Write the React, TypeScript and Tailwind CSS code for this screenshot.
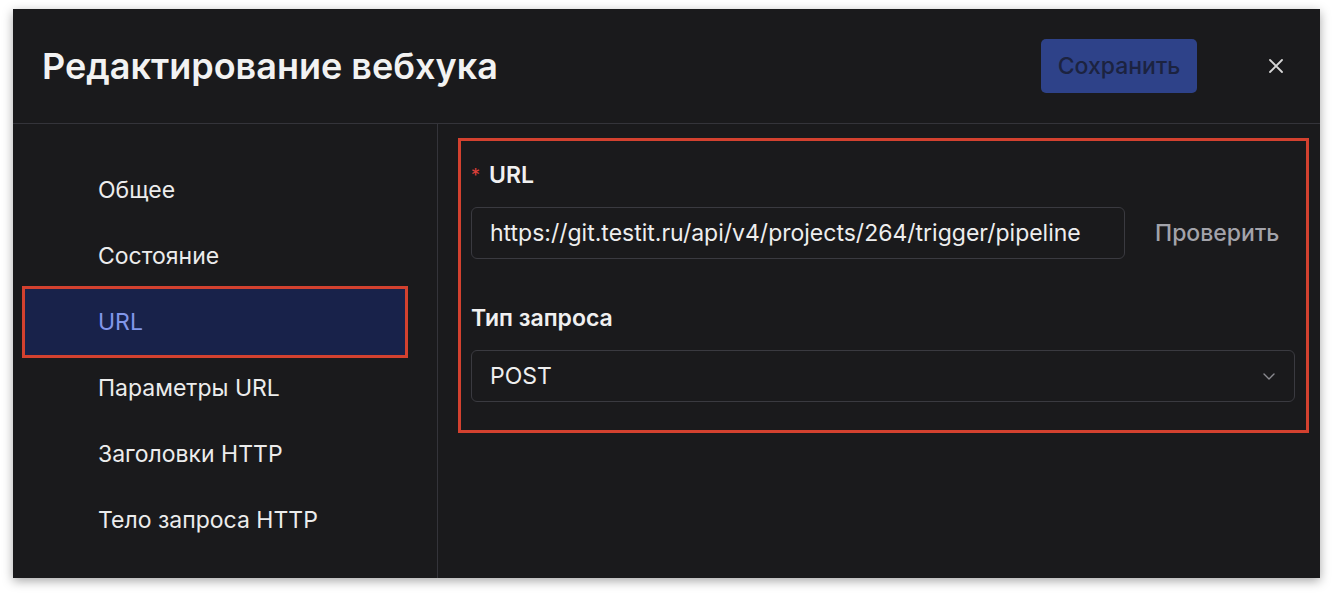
import React from "react";

const items = ["Общее", "Состояние", "URL", "Параметры URL", "Заголовки HTTP", "Тело запроса HTTP"];

export default function App() {
  return (
    <div className="w-full h-[599px] bg-white pl-[13px] pt-[9px]" style={{ fontFamily: "Inter, 'Noto Sans', sans-serif" }}>
      <div className="w-[1307px] h-[569px] bg-[#1a1a1c] shadow-[0_3px_10px_rgba(0,0,0,0.35)] flex flex-col">
        <div className="h-[115px] shrink-0 border-b border-[#34343a] flex items-center pl-[29px] pr-[36px]">
          <h1 className="text-[36px] font-semibold text-[#f2f2f2] flex-1">Редактирование вебхука</h1>
          <button className="h-[54px] w-[156px] rounded-[5px] bg-[#2e4289] text-[#1c2340] text-[23px] font-medium">Сохранить</button>
          <button className="ml-[71px] text-[#d6d6d6]">
            <svg width="16" height="16" viewBox="0 0 16 16" fill="none" stroke="currentColor" strokeWidth="1.8" strokeLinecap="round">
              <path d="M2 2L14 14M14 2L2 14" />
            </svg>
          </button>
        </div>
        <div className="flex flex-1 min-h-0">
          <div className="w-[425px] shrink-0 border-r border-[#34343a] pl-[12px] pt-[33px]">
            {items.map((it) => {
              const active = it === "URL";
              return (
                <div
                  key={it}
                  className={
                    "w-[380px] h-[66px] flex items-center pl-[73px] text-[23px] " +
                    (active ? "bg-[#18224a] text-[#8197ea] outline-[3px] outline-solid outline-[#d3412f]" : "text-[#ececec]")
                  }
                >
                  {it}
                </div>
              );
            })}
          </div>
          <div className="flex-1 pl-[20px] pr-[11px] pt-[14px]">
            <div className="border-[3px] border-[#d3412f] pl-[10px] pr-[11px] pt-[20px] pb-[28px]">
              <div className="h-[28px] flex items-center text-[23px] font-semibold text-[#f0f0f0]">
                <span className="text-[#e0403a] text-[18px] mr-[9px] font-normal">*</span>URL
              </div>
              <div className="mt-[18px] flex items-center">
                <div className="w-[654px] h-[52px] border border-[#3a3a40] rounded-[6px] flex items-center pl-[18px] text-[23px] text-[#eeeeee] whitespace-nowrap">
                  https://git.testit.ru/api/v4/projects/264/trigger/pipeline
                </div>
                <span className="ml-[30px] text-[23px] text-[#a3a3aa] font-medium">Проверить</span>
              </div>
              <div className="mt-[45px] h-[28px] flex items-center text-[23px] font-semibold text-[#f0f0f0]">Тип запроса</div>
              <div className="mt-[18px] h-[52px] border border-[#3a3a40] rounded-[6px] flex items-center pl-[18px] pr-[18px] text-[23px] text-[#eeeeee]">
                <span className="flex-1">POST</span>
                <svg width="14" height="14" viewBox="0 0 14 14" fill="none" stroke="#8a8a90" strokeWidth="1.4" strokeLinecap="round" strokeLinejoin="round">
                  <path d="M2 5l5 5 5-5" />
                </svg>
              </div>
            </div>
          </div>
        </div>
      </div>
    </div>
  );
}
